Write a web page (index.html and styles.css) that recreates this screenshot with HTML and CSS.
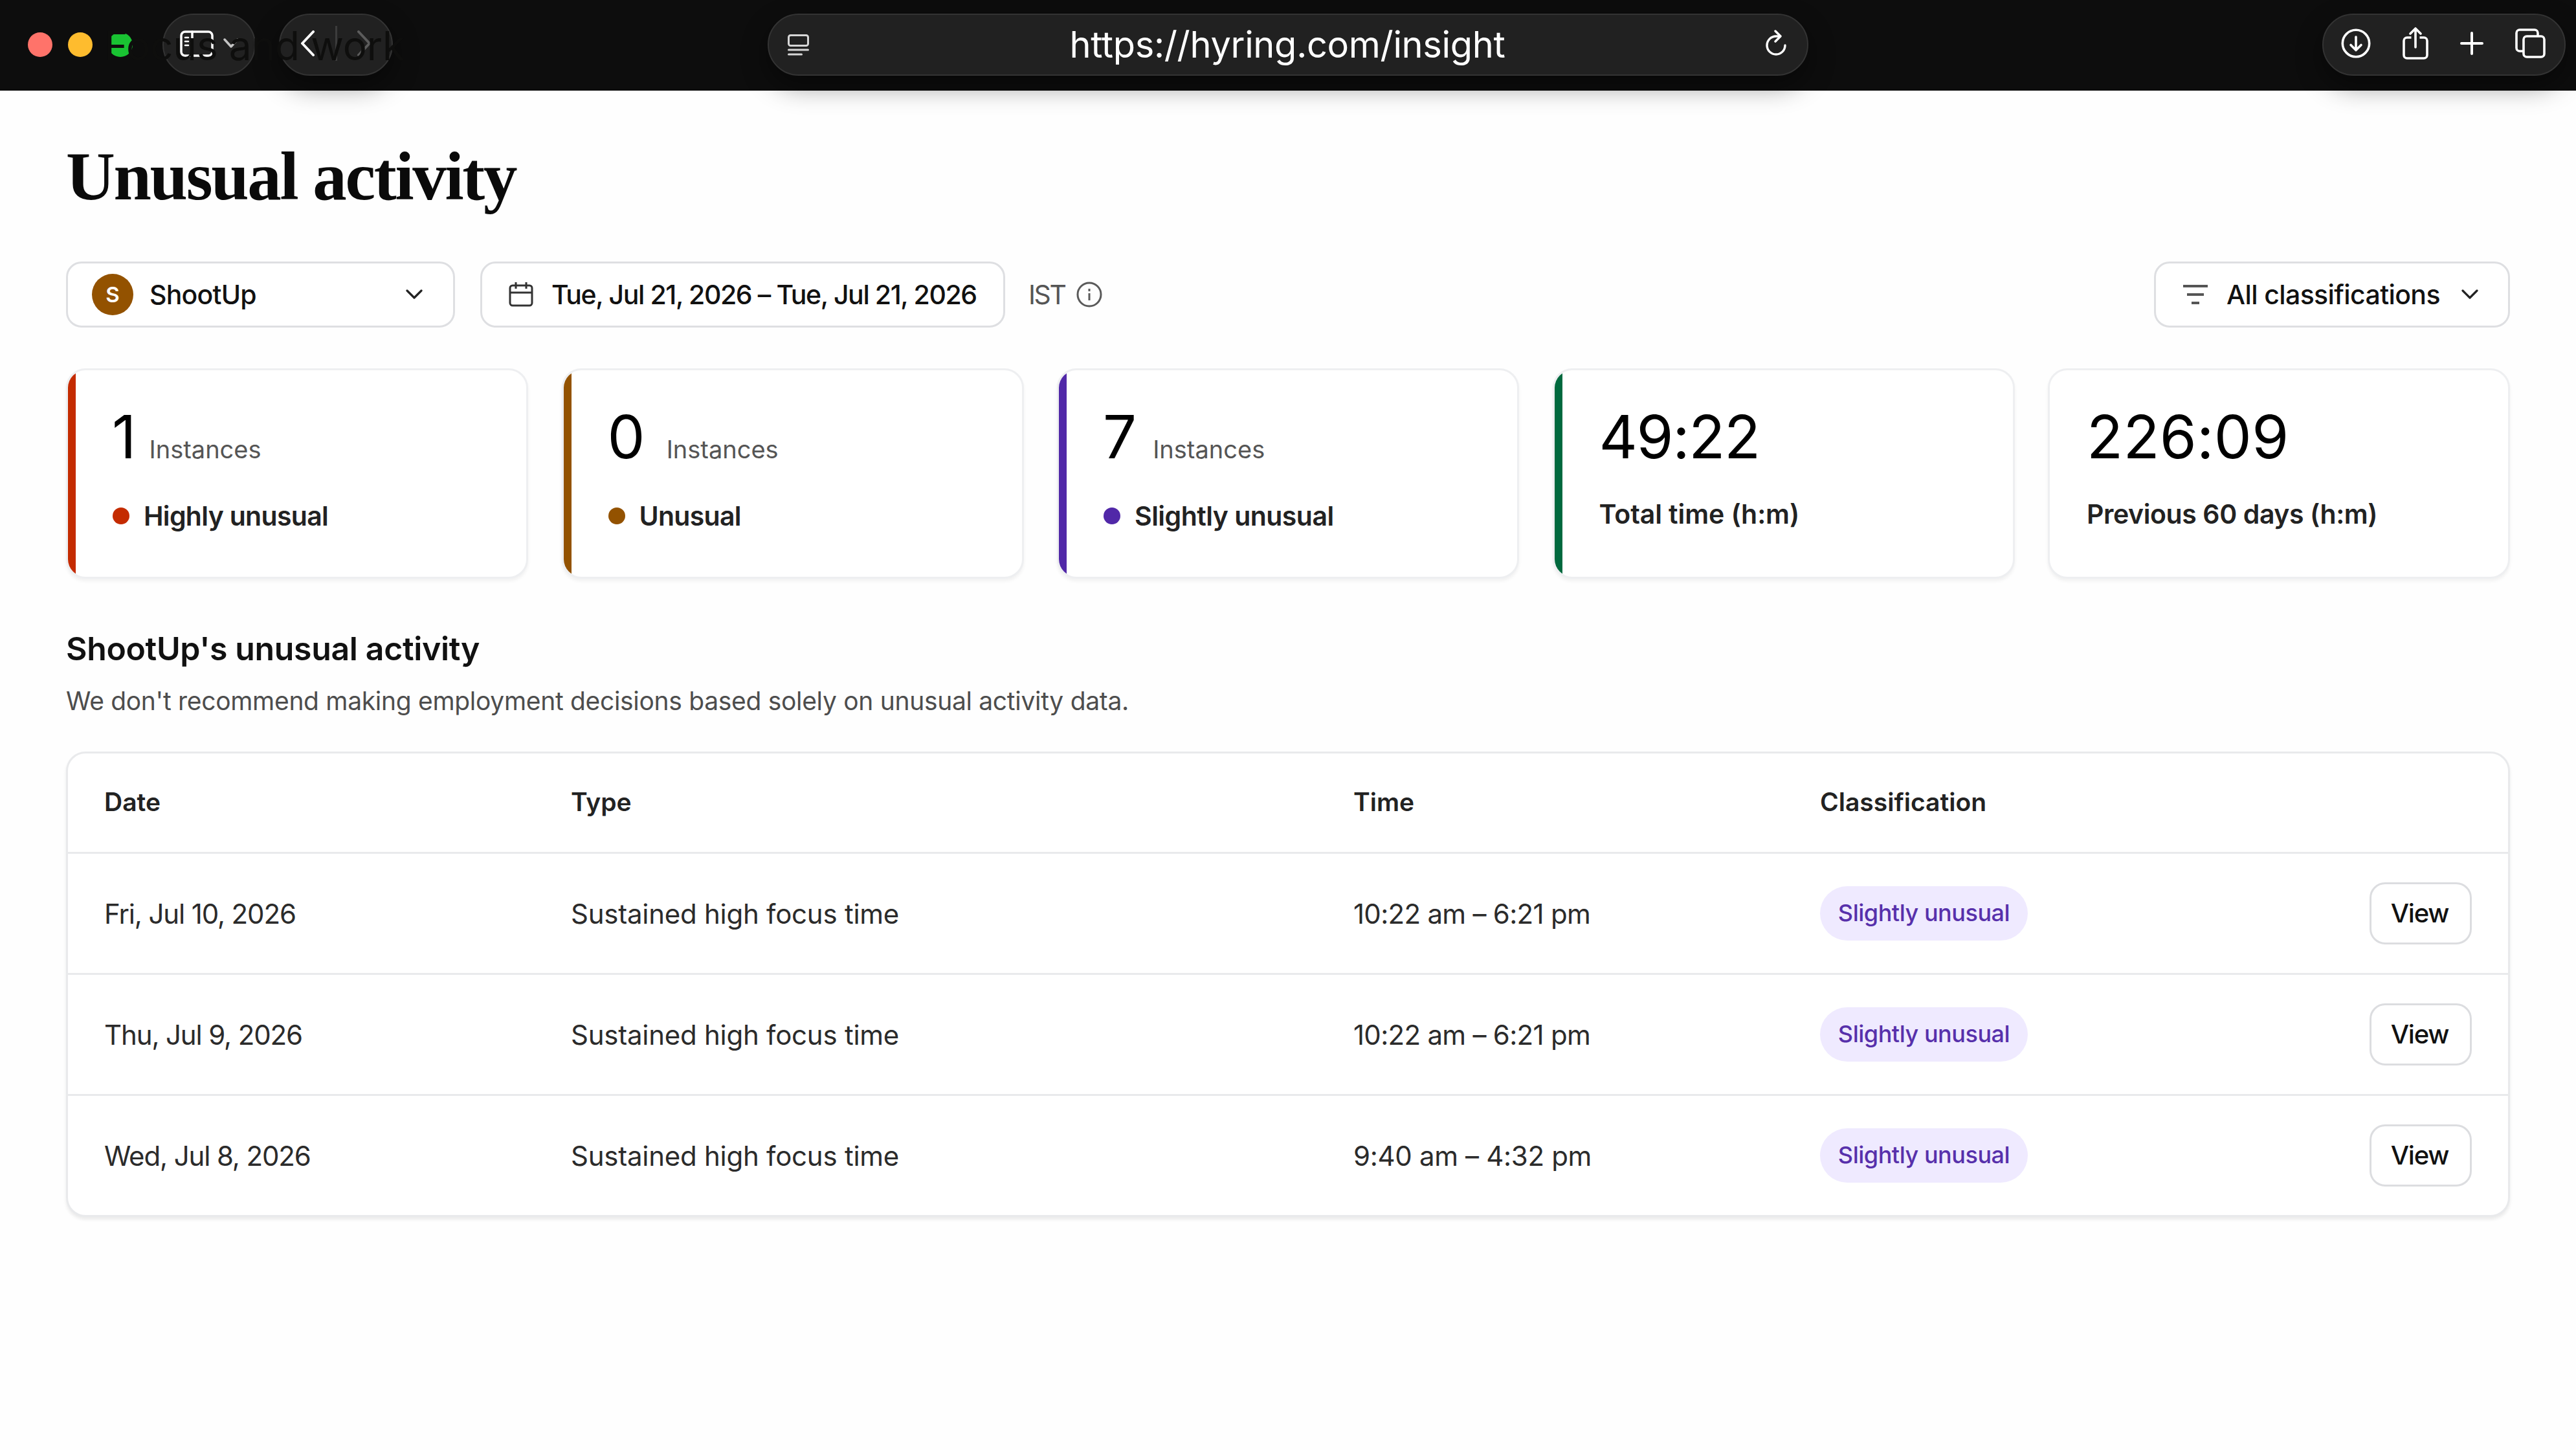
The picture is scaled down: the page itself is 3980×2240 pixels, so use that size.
FILE: index.html
```html
<!DOCTYPE html>
<html lang="en">
<head>
    <meta charset="UTF-8">
    <meta name="viewport" content="width=device-width, initial-scale=1.0">
    <title>Unusual activity</title>
    <link rel="stylesheet" href="styles.css">
</head>
<body>
    <header class="browser-bar">
        <div class="lights">
            <span class="light red"></span>
            <span class="light yellow"></span>
            <span class="light green"></span>
        </div>
        <div class="pill sidebar-pill">
            <svg class="sidebar-icon" viewBox="0 0 52 41" fill="none" stroke="#fff" stroke-width="3.5" stroke-linecap="round">
                <rect x="2" y="2" width="48" height="37" rx="6"/>
                <path d="M19 2v37"/>
                <path d="M8 11h5M8 17h5M8 23h5" stroke-width="2.5"/>
            </svg>
            <svg class="sidebar-arrow" viewBox="0 0 24 16" fill="none" stroke="#c4c4c4" stroke-width="3.5" stroke-linecap="round" stroke-linejoin="round">
                <path d="M2 2l10 11L22 2"/>
            </svg>
        </div>
        <div class="pill nav-pill shadow">
            <svg viewBox="0 0 23 40" fill="none" stroke="#fff" stroke-width="4" stroke-linecap="round" stroke-linejoin="round">
                <path d="M20 2L3 20l17 18"/>
            </svg>
            <span class="nav-divider"></span>
            <svg viewBox="0 0 23 40" fill="none" stroke="#5c5c5c" stroke-width="4" stroke-linecap="round" stroke-linejoin="round">
                <path d="M3 2l17 18L3 38"/>
            </svg>
        </div>
        <div class="pill address shadow">
            <svg class="reader-icon" viewBox="0 0 33 33" fill="none" stroke="#d6d6d6" stroke-width="3" stroke-linecap="round">
                <rect x="1.5" y="1.5" width="30" height="16" rx="3"/>
                <path d="M1.5 24h30M1.5 31h20"/>
            </svg>
            <span class="url">https://hyring.com/insight</span>
            <svg class="reload-icon" viewBox="0 0 32 40" fill="none" stroke="#fff" stroke-width="3.4" stroke-linecap="round" stroke-linejoin="round">
                <path d="M30 24a14 14 0 1 1-14-14h6"/>
                <path d="M15 2l8 8-8 8"/>
            </svg>
        </div>
        <div class="pill actions shadow">
            <svg class="download-icon" viewBox="0 0 46 46" fill="none" stroke="#fff" stroke-width="3.6" stroke-linecap="round" stroke-linejoin="round">
                <circle cx="23" cy="23" r="20.7"/>
                <path d="M23 13v20M15 25.500l8 8 8-8"/>
            </svg>
            <svg class="share-icon" viewBox="0 0 40 50" fill="none" stroke="#fff" stroke-width="3.6" stroke-linecap="round" stroke-linejoin="round">
                <path d="M20 2v29M12 10l8-8 8 8"/>
                <path d="M13.500 16H7a5 5 0 0 0-5 5v22a5 5 0 0 0 5 5h26a5 5 0 0 0 5-5V21a5 5 0 0 0-5-5h-6.500" stroke-linecap="butt"/>
            </svg>
            <svg class="plus-icon" viewBox="0 0 36 36" fill="none" stroke="#fff" stroke-width="4" stroke-linecap="round">
                <path d="M18 2v32M2 18h32"/>
            </svg>
            <svg class="tabs-icon" viewBox="0 0 47 46" fill="none" stroke="#fff" stroke-width="3.6">
                <path d="M12 35H7a5 5 0 0 1-5-5V7a5 5 0 0 1 5-5h23a5 5 0 0 1 5 5v4"/>
                <rect x="13" y="12" width="32" height="32" rx="5"/>
            </svg>
        </div>
        <!-- page text showing through the translucent bar -->
        <span class="ghost-text">Focus and work</span>
    </header>

    <main class="page">
        <h1>Unusual activity</h1>

        <div class="filters">
            <div class="select member">
                <span class="avatar">S</span>
                <span class="member-name">ShootUp</span>
                <svg class="arrow" viewBox="0 0 26 16" fill="none" stroke="#222" stroke-width="3.2" stroke-linecap="round" stroke-linejoin="round">
                    <path d="M2 2l11 11L24 2"/>
                </svg>
            </div>
            <div class="select dates">
                <svg class="calendar-icon" viewBox="0 0 38 38" fill="none" stroke="#333" stroke-width="3">
                    <rect x="2" y="5" width="34" height="31" rx="4"/>
                    <path d="M2 16h34M11 0v10M27 0v10"/>
                </svg>
                <span class="date-range">Tue, Jul 21, 2026 – Tue, Jul 21, 2026</span>
            </div>
            <span class="timezone">IST</span>
            <svg class="info-icon" viewBox="0 0 40 40" fill="none" stroke="#5a5a5a" stroke-width="3">
                <circle cx="20" cy="20" r="18"/>
                <path d="M20 18v11M20 11v4"/>
            </svg>
            <div class="select classes">
                <svg class="filter-icon" viewBox="0 0 38 34" fill="none" stroke="#555" stroke-width="4">
                    <path d="M0 4h38M6 17h26M13 30h12"/>
                </svg>
                <span class="class-name">All classifications</span>
                <svg class="arrow" viewBox="0 0 26 16" fill="none" stroke="#222" stroke-width="3.2" stroke-linecap="round" stroke-linejoin="round">
                    <path d="M2 2l11 11L24 2"/>
                </svg>
            </div>
        </div>

        <div class="cards">
            <div class="card high">
                <div class="count"><span class="number">1</span><span class="unit">Instances</span></div>
                <div class="label"><span class="dot"></span>Highly unusual</div>
            </div>
            <div class="card medium">
                <div class="count"><span class="number">0</span><span class="unit">Instances</span></div>
                <div class="label"><span class="dot"></span>Unusual</div>
            </div>
            <div class="card slight">
                <div class="count"><span class="number">7</span><span class="unit">Instances</span></div>
                <div class="label"><span class="dot"></span>Slightly unusual</div>
            </div>
            <div class="card total">
                <div class="count"><span class="number">49:22</span></div>
                <div class="label plain">Total time (h:m)</div>
            </div>
            <div class="card previous">
                <div class="count"><span class="number">226:09</span></div>
                <div class="label plain">Previous 60 days (h:m)</div>
            </div>
        </div>

        <h2>ShootUp's unusual activity</h2>
        <p class="note">We don't recommend making employment decisions based solely on unusual activity data.</p>

        <div class="table">
            <div class="row head">
                <span>Date</span>
                <span>Type</span>
                <span>Time</span>
                <span>Classification</span>
            </div>
            <div class="row">
                <span class="date">Fri, Jul 10, 2026</span>
                <span class="type">Sustained high focus time</span>
                <span class="time">10:22 am – 6:21 pm</span>
                <span class="tag">Slightly unusual</span>
                <button class="view">View</button>
            </div>
            <div class="row">
                <span class="date">Thu, Jul 9, 2026</span>
                <span class="type">Sustained high focus time</span>
                <span class="time">10:22 am – 6:21 pm</span>
                <span class="tag">Slightly unusual</span>
                <button class="view">View</button>
            </div>
            <div class="row">
                <span class="date">Wed, Jul 8, 2026</span>
                <span class="type">Sustained high focus time</span>
                <span class="time late">9:40 am – 4:32 pm</span>
                <span class="tag">Slightly unusual</span>
                <button class="view">View</button>
            </div>
        </div>
    </main>
</body>
</html>
```
FILE: styles.css
```css
* {
    box-sizing: border-box;
}
body {
    margin: 0;
    min-height: 100vh;
    background: #fefefe;
    color: #111;
    font-family: Inter, sans-serif;
    white-space: nowrap;
}
svg {
    display: block;
    flex: none;
}

/* browser bar */
.browser-bar {
    position: relative;
    display: flex;
    align-items: center;
    height: 140px;
    padding: 0 16px 2px 43px;
    background: #0d0d0d;
}
.lights {
    display: flex;
    gap: 24px;
}
.light {
    width: 38px;
    height: 38px;
    border-radius: 50%;
}
.red {
    background: #ff736a;
}
.yellow {
    background: #febc2e;
}
.green {
    background: #19c332;
}
.pill {
    display: flex;
    align-items: center;
    height: 96px;
    border: 2px solid #333;
    border-radius: 48px;
    background: #212121;
}
.shadow {
    box-shadow: 0 16px 40px rgba(0, 0, 0, 0.42);
}
.sidebar-pill {
    width: 144px;
    margin-left: 46px;
    padding: 0 0 4px 25px;
    gap: 15px;
}
.sidebar-icon {
    width: 52px;
    height: 41px;
}
.sidebar-arrow {
    width: 24px;
    height: 16px;
}
.nav-pill {
    width: 176px;
    margin-left: 36px;
    padding: 0 31px 4px;
    justify-content: space-between;
}
.nav-pill svg {
    width: 23px;
    height: 40px;
}
.nav-divider {
    width: 3px;
    height: 54px;
    background: #3c3c3c;
}
.address {
    width: 1608px;
    margin-left: 579px;
    padding: 0 32px 0 29px;
}
.reader-icon {
    width: 33px;
    height: 33px;
}
.url {
    flex: 1;
    color: #fff;
    font-size: 56px;
    letter-spacing: -0.006em;
    text-align: center;
}
.reload-icon {
    width: 32px;
    height: 40px;
    margin-bottom: 6px;
}
.actions {
    width: 376px;
    margin-left: auto;
    padding: 0 29px 4px 27px;
    justify-content: space-between;
}
.download-icon {
    width: 46px;
    height: 46px;
}
.share-icon {
    width: 40px;
    height: 50px;
}
.plus-icon {
    width: 36px;
    height: 36px;
}
.tabs-icon {
    width: 47px;
    height: 46px;
}
.ghost-text {
    position: absolute;
    left: 161px;
    top: 31px;
    color: #0e0e0d;
    font-size: 62px;
    line-height: 80px;
    letter-spacing: -0.002em;
}

/* page */
.page {
    padding: 73px 102px 0;
}
h1 {
    margin: 0;
    color: #0a0a0a;
    font: bold 105px/120px "Liberation Serif", serif;
    letter-spacing: -0.022em;
}
.filters {
    display: flex;
    align-items: center;
    margin-top: 71px;
    font-size: 41px;
    font-weight: 500;
}
.select {
    display: flex;
    align-items: center;
    height: 102px;
    border: 3px solid #dedfe2;
    border-radius: 24px;
    background: #fff;
}
.member {
    width: 601px;
    padding: 0 47px 0 37px;
}
.avatar {
    width: 64px;
    height: 64px;
    margin-right: 25px;
    border-radius: 50%;
    background: #935200;
    color: #fff;
    font-size: 33px;
    font-weight: 600;
    line-height: 64px;
    text-align: center;
}
.member-name {
    flex: 1;
    letter-spacing: -0.019em;
}
.arrow {
    width: 26px;
    height: 16px;
}
.dates {
    width: 811px;
    margin-left: 39px;
    padding-left: 41px;
}
.calendar-icon {
    width: 38px;
    height: 38px;
    margin-right: 28px;
}
.date-range {
    letter-spacing: -0.034em;
}
.timezone {
    margin-left: 36px;
    color: #555;
    font-weight: 400;
    letter-spacing: -0.06em;
}
.info-icon {
    width: 40px;
    height: 40px;
    margin-left: 18px;
}
.classes {
    width: 550px;
    margin-left: auto;
    padding: 0 46px 0 42px;
}
.filter-icon {
    width: 38px;
    height: 34px;
    margin-right: 29px;
}
.class-name {
    flex: 1;
    letter-spacing: -0.015em;
}

/* cards */
.cards {
    display: grid;
    grid-template-columns: repeat(5, 1fr);
    gap: 51.5px;
    margin-top: 63px;
}
.card {
    position: relative;
    height: 325px;
    padding: 48px 0 0 68px;
    border: 3px solid #eeeff1;
    border-radius: 30px;
    background: #fff;
    box-shadow: 0 4px 5px rgba(0, 0, 0, 0.05);
    overflow: hidden;
}
.card::before {
    content: "";
    position: absolute;
    left: 0;
    top: 0;
    bottom: 0;
    width: 12px;
}
.high::before, .high .dot {
    background: #c42b00;
}
.medium::before, .medium .dot {
    background: #935200;
}
.slight::before, .slight .dot {
    background: #5128a8;
}
.total::before {
    background: #00693e;
}
.total {
    padding-left: 69px;
}
.previous {
    padding-left: 57px;
}
.count {
    display: flex;
    align-items: baseline;
}
.number {
    color: #000;
    font-size: 92px;
    line-height: 110px;
    letter-spacing: -0.01em;
}
.total .number {
    letter-spacing: -0.015em;
}
.previous .number {
    letter-spacing: 0.003em;
}
.unit {
    margin-left: 21px;
    color: #555;
    font-size: 38px;
}
.medium .unit {
    margin-left: 34px;
}
.slight .unit {
    margin-left: 26px;
}
.label {
    display: flex;
    align-items: center;
    margin-top: 42px;
    color: #222;
    font-size: 41px;
    font-weight: 600;
    line-height: 50px;
    letter-spacing: -0.017em;
}
.slight .label {
    letter-spacing: -0.013em;
}
.plain {
    margin-top: 39px;
    letter-spacing: -0.01em;
}
.total .plain {
    letter-spacing: -0.002em;
}
.dot {
    width: 26px;
    height: 26px;
    margin: 0 22px 0 1px;
    border-radius: 50%;
}

/* activity table */
h2 {
    margin: 78px 0 0;
    font-size: 50px;
    font-weight: 600;
    line-height: 60px;
    letter-spacing: -0.007em;
}
.note {
    margin: 27px 0 54px;
    color: #4d4d4d;
    font-size: 39px;
    line-height: 48px;
    letter-spacing: -0.008em;
}
.table {
    border: 3px solid #e9eaec;
    border-radius: 30px;
    background: #fff;
    box-shadow: 0 4px 5px rgba(0, 0, 0, 0.08);
}
.row {
    display: grid;
    grid-template-columns: 721px 1209px 721px 1fr auto;
    align-items: center;
    height: 187px;
    padding: 0 56px;
    border-bottom: 3px solid #e9eaec;
    color: #2b2b2b;
    font-size: 42px;
}
.row:last-child {
    height: 184px;
    border-bottom: none;
}
.head {
    height: 155px;
    padding-bottom: 3px;
    color: #222;
    font-size: 39px;
    font-weight: 600;
}
.date {
    letter-spacing: -0.027em;
}
.type {
    letter-spacing: -0.006em;
}
.time {
    letter-spacing: -0.017em;
}
.late {
    letter-spacing: -0.008em;
}
.tag {
    justify-self: start;
    width: 321px;
    height: 84px;
    border-radius: 42px;
    background: #efeaff;
    color: #5730ab;
    font-size: 36px;
    font-weight: 500;
    line-height: 83px;
    letter-spacing: -0.013em;
    text-align: center;
}
.view {
    width: 158px;
    height: 96px;
    padding: 0 3px 2px 0;
    border: 3px solid #dcdde0;
    border-radius: 24px;
    background: #fff;
    color: #111;
    font: 500 40px Inter, sans-serif;
    letter-spacing: -0.03em;
}
```
